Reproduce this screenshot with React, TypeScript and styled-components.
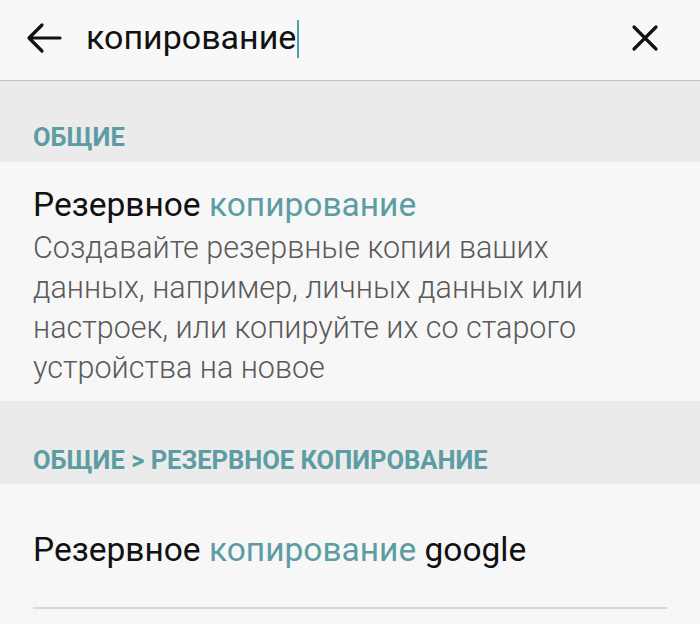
import React from "react";
import styled, { createGlobalStyle } from "styled-components";

const COLOR = {
  BAR: "#f8f8f8",
  SECTION: "#ebebeb",
  ITEM: "#f7f7f7",
  TEAL: "#5c9ca3",
  TEXT: "#111111",
  SUB: "#5a5a5a",
  LINE: "#d8d8d8",
};

const GlobalStyle = createGlobalStyle`
  html, body {
    margin: 0;
    padding: 0;
    background: ${COLOR.ITEM};
    font-family: Roboto, "Noto Sans", sans-serif;
  }
`;

type Result = {
  section: string;
  before: string;
  match: string;
  after?: string;
  summary?: string;
};

const results: Result[] = [
  {
    section: "ОБЩИЕ",
    before: "Резервное ",
    match: "копирование",
    summary:
      "Создавайте резервные копии ваших данных, например, личных данных или настроек, или копируйте их со старого устройства на новое",
  },
  {
    section: "ОБЩИЕ > РЕЗЕРВНОЕ КОПИРОВАНИЕ",
    before: "Резервное ",
    match: "копирование",
    after: " google",
  },
];

const BackIcon = () => (
  <svg width="36" height="32" viewBox="0 0 36 32" fill="none">
    <path
      d="M34 16H4M16 3L3 16l13 13"
      stroke="#111"
      strokeWidth="3.2"
      strokeLinecap="round"
      strokeLinejoin="round"
    />
  </svg>
);

const CloseIcon = () => (
  <svg width="28" height="28" viewBox="0 0 28 28" fill="none">
    <path
      d="M3 3l22 22M25 3L3 25"
      stroke="#111"
      strokeWidth="3.2"
      strokeLinecap="round"
    />
  </svg>
);

export default function App() {
  return (
    <>
      <GlobalStyle />
      <Screen>
        <SearchBar>
          <IconButton>
            <BackIcon />
          </IconButton>
          <Query>
            копирование
            <Caret />
          </Query>
          <IconButton>
            <CloseIcon />
          </IconButton>
        </SearchBar>
        {results.map((r, i) => (
          <React.Fragment key={i}>
            <SectionHeader tall={i > 0}>{r.section}</SectionHeader>
            <Item last={i === results.length - 1}>
              <Title>
                {r.before}
                <Hit>{r.match}</Hit>
                {r.after}
              </Title>
              {r.summary && <Summary>{r.summary}</Summary>}
            </Item>
          </React.Fragment>
        ))}
      </Screen>
    </>
  );
}

const Screen = styled.div`
  width: 700px;
  height: 624px;
  overflow: hidden;
  background: ${COLOR.ITEM};
  display: flex;
  flex-direction: column;
`;

const SearchBar = styled.div`
  height: 81px;
  box-sizing: border-box;
  display: flex;
  align-items: center;
  padding: 0 41px 0 26px;
  background: ${COLOR.BAR};
  border-bottom: 1.5px solid #c2c2c2;
  flex-shrink: 0;
`;

const IconButton = styled.div`
  display: flex;
  align-items: center;
  justify-content: center;
  margin-top: -4px;
`;

const Query = styled.div`
  flex: 1;
  display: flex;
  align-items: center;
  margin-left: 24px;
  font-size: 34px;
  color: ${COLOR.TEXT};
  margin-top: -6px;
`;

const Caret = styled.span`
  display: inline-block;
  width: 2px;
  height: 38px;
  background: #4f9ea8;
  margin-left: 1px;
  margin-top: 4px;
`;

const SectionHeader = styled.div<{ tall?: boolean }>`
  height: ${(p) => (p.tall ? "83px" : "81px")};
  box-sizing: border-box;
  background: ${COLOR.SECTION};
  padding: ${(p) => (p.tall ? "44px" : "41px")} 33px 0;
  font-size: 25.5px;
  line-height: 30px;
  font-weight: 700;
  color: ${COLOR.TEAL};
  flex-shrink: 0;
`;

const Item = styled.div<{ last?: boolean }>`
  padding: 23px 33px 13px;
  flex-shrink: 0;
  ${(p) =>
    p.last &&
    `
    height: 125px;
    box-sizing: border-box;
    padding: 46px 0 0;
    border-bottom: 2px solid ${COLOR.LINE};
    margin: 0 33px;
  `}
`;

const Title = styled.div`
  font-size: 33.5px;
  color: ${COLOR.TEXT};
  line-height: 40px;
`;

const Hit = styled.span`
  color: ${COLOR.TEAL};
`;

const Summary = styled.div`
  max-width: 568px;
  margin-top: 3px;
  font-size: 30.5px;
  font-weight: 300;
  line-height: 40px;
  color: ${COLOR.SUB};
`;
